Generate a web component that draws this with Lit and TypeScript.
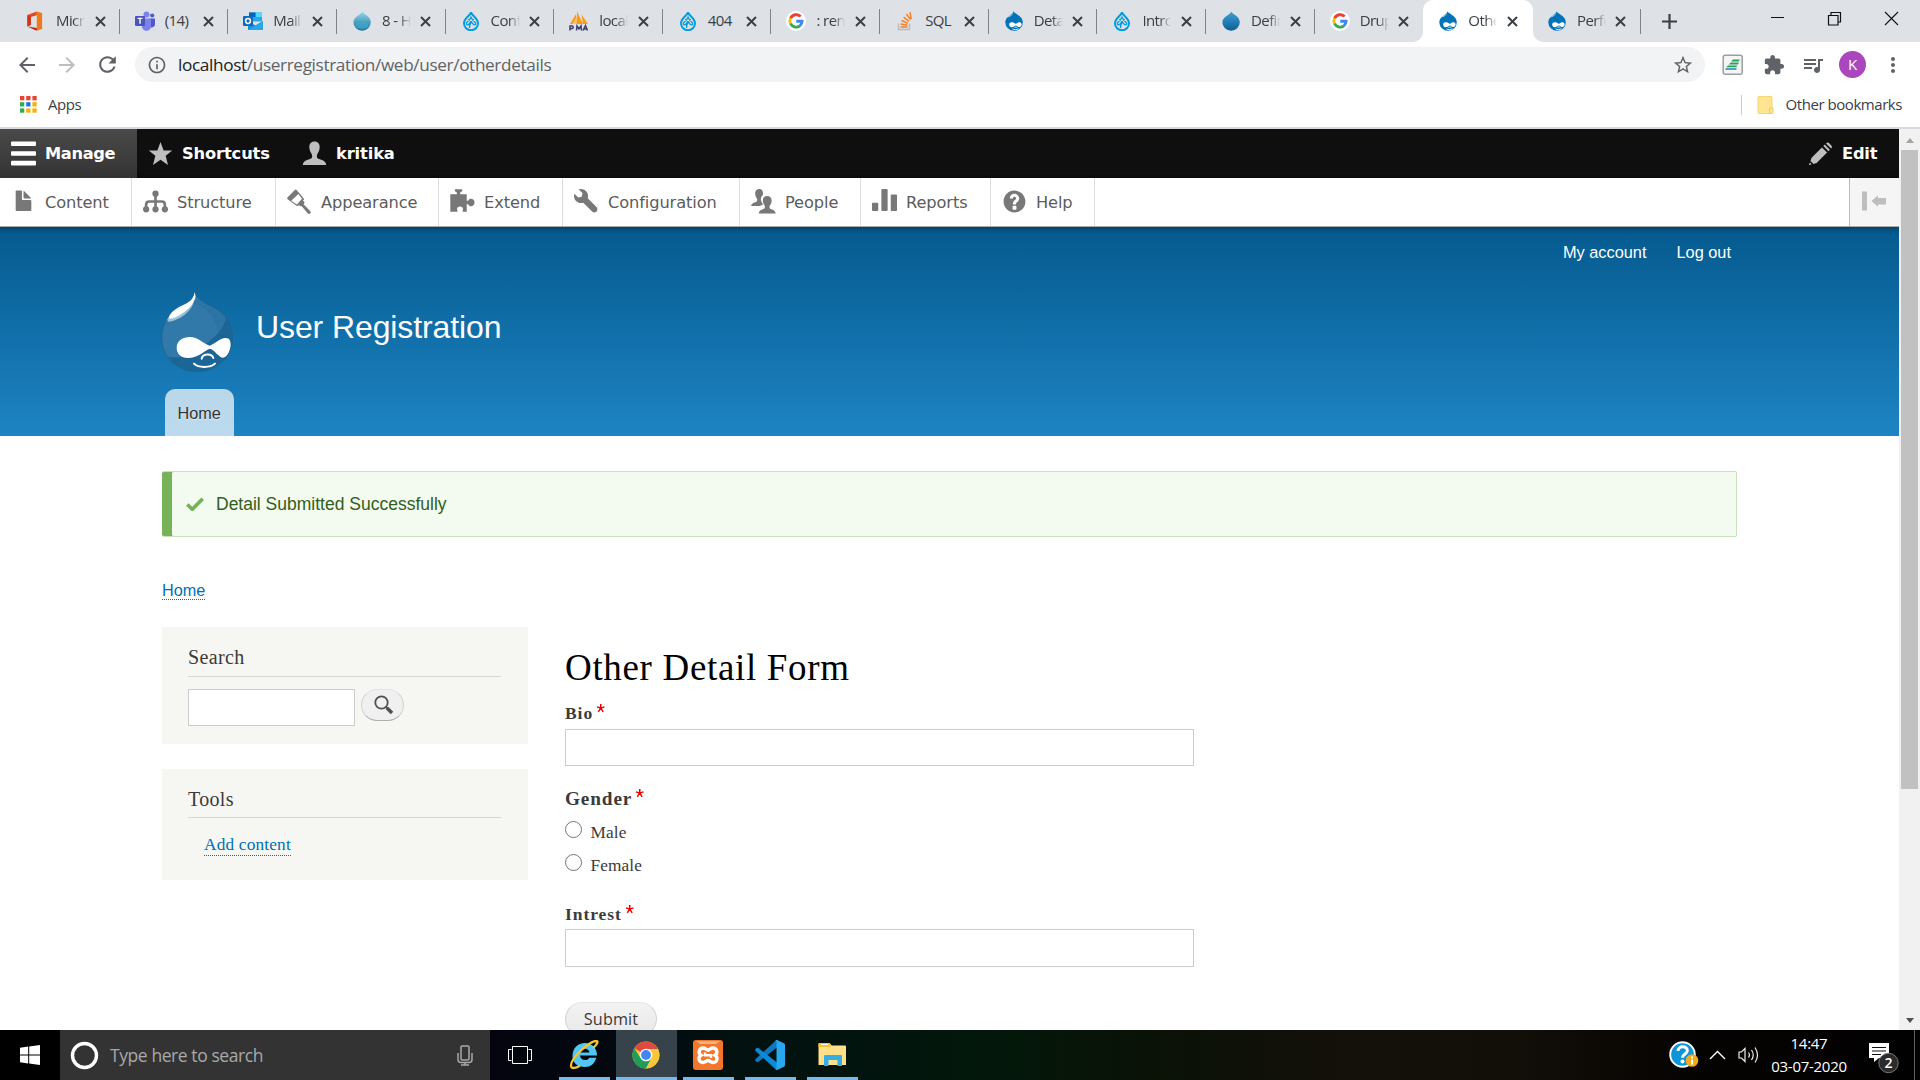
import { LitElement, html, svg, css, TemplateResult } from "lit";
import { customElement } from "lit/decorators.js";
import { classMap } from "lit/directives/class-map.js";

/* ---------- favicons ---------- */

const office = html`<svg class="fav" viewBox="0 0 20 20">
  <path d="M10.800 .4 1.400 4v11.600l3.400-1.700V5.900l6-1.600z" fill="#e8471f"/>
  <path d="M10.800 .4 16.100 2v16l-5.300 1.700z" fill="#f07a1a"/>
  <path d="M1.400 15.600 10.800 17v2.700z" fill="#b9200c"/>
  <path d="M1.400 4v11.600l3.400-1.700V5.900z" fill="#d3301a"/></svg>`;
const teams = html`<svg class="fav" viewBox="0 0 20 20">
  <circle cx="11.5" cy="3.6" r="3" fill="#7b83eb"/><circle cx="17.2" cy="4.5" r="2.1" fill="#5059c9"/>
  <path d="M14 7.5h6v5.8a3.4 3.4 0 0 1-6 2z" fill="#5059c9"/>
  <path d="M7 7.5h9v7a4.5 4.5 0 0 1-9 1.5z" fill="#7b83eb"/>
  <rect y="5" width="10" height="10" rx="1" fill="#4b53bc"/>
  <path d="M2.6 7.4h4.9M5.05 7.4v5.4" stroke="#fff" stroke-width="1.4"/></svg>`;
const outlook = html`<svg class="fav" viewBox="0 0 20 20">
  <path d="M6 1.5h13v9H6z" fill="#28a8ea"/><path d="M12.5 1.5H19V6h-6.5z" fill="#50d9ff"/><path d="M6 1.5h6.5V6H6z" fill="#0364b8"/>
  <path d="M5 10l7.5 4.5L20 10v9H5z" fill="#1490df"/><path d="M5 19 20 10v9z" fill="#28a8ea"/>
  <rect y="5" width="10" height="10" rx="1" fill="#0f6cbd"/>
  <circle cx="5" cy="10" r="2.4" fill="none" stroke="#fff" stroke-width="1.5"/></svg>`;
const drop = (top: string, low: string, id: string, shine = false) => html`<svg class="fav" viewBox="0 0 20 20">
  <defs><linearGradient id=${id} x1="0" y1="0" x2="0" y2="1"><stop offset="0" stop-color=${top}/><stop offset="1" stop-color=${low}/></linearGradient></defs>
  <path d="M10.400 .5c.5 2.600 8.400 4.600 8.400 10.800a8.700 8.400 0 0 1-17.400 0C1.400 5.600 9.200 4 10.400 .5z" fill="url(#${id})"/>
  ${shine ? svg`<ellipse cx="10" cy="14.500" rx="6.500" ry="3.500" fill="#3fb0d0" opacity=".6"/>` : ""}</svg>`;
const drupal9 = html`<svg class="fav" viewBox="0 0 20 20">
  <path d="M10 1.300C9.300 4.600 3 7 3 12.300a7 6.900 0 0 0 14 0C17 7 10.700 4.600 10 1.300z" fill="none" stroke="#009cde" stroke-width="2"/>
  <path d="M7.200 8.200C9.500 9.700 11 11.500 12.300 13.300c1.300 1.500 3.400-.4 1.700-2C12.500 9.800 10.800 8.300 10 6.200 9.200 8.300 7.500 9.800 6 11.300c-1.700 1.600.4 3.500 1.700 2C9 11.500 10.500 9.700 12.800 8.200M10 11.500c-1.300 1.800-1.800 3.200-1.500 5.500" fill="none" stroke="#009cde" stroke-width="1.300"/></svg>`;
const pma = html`<svg class="fav" viewBox="0 0 20 20">
  <path d="M1 13 7 3v10zM8 13V.5L14 13zM14 13 12.500 3.500 19 13z" fill="#f89c1c"/>
  <path d="M3.500 13 8 5v8z" fill="#ffc067"/>
  <path d="M1 19.500v-4.500h2.500q1.500 1.300 0 2.500H1M7.500 19.500l.5-4.500 2 3 2-3 .5 4.500M14 19.500l2.500-5 2 5M14.800 18h3" fill="none" stroke="#3f3f6b" stroke-width="1.500"/></svg>`;
const google = html`<svg class="fav" viewBox="0 0 20 20"><circle cx="10" cy="10" r="10" fill="#fff"/>
  <g fill="none" stroke-width="2.900">
  <path d="M14.600 5.600A6.100 6.100 0 0 0 4.600 7.300" stroke="#ea4335"/><path d="M4.600 7.200a6.100 6.100 0 0 0 0 5.600" stroke="#fbbc05"/>
  <path d="M4.600 12.700a6.100 6.100 0 0 0 9.500 1.900" stroke="#34a853"/><path d="M14 14.700a6.100 6.100 0 0 0 2.100-4.400H10.200" stroke="#4285f4"/></g></svg>`;
const stack = html`<svg class="fav" viewBox="0 0 20 20"><path d="M3.500 12.500v6h11v-6" fill="none" stroke="#bcbbbb" stroke-width="1.500"/>
  <path d="M5.500 16h7M5.700 13l6.800 1.300M6.600 9.500l6.300 2.900M8.600 6l5.300 4.400M11.500 3l4 5.600M15 1.200l1.300 6.700" stroke="#f48024" stroke-width="1.500"/></svg>`;
const druplicon = html`<svg class="fav" viewBox="0 0 20 20">
  <path d="M9.500 .3c.6 2.500 9.300 4.200 9.300 11a8.700 8.500 0 0 1-17.500 0C1.300 5.300 9 4 9.500 .3z" fill="#0073ba"/>
  <path d="M9.300 1.200c0 2.600-3 4.300-6 5.400C5 4.600 8.500 4 9.300 1.200z" fill="#cfe5f4"/>
  <path d="M5.200 13.600c0-3 4-3.200 6.700-.6 2.500-2.600 5.700-2.400 5.700.3 0 3.300-3.200 3.600-5.600.9-2.900 2.800-6.800 2.600-6.800-.6z" fill="#fff"/>
  <path d="M8.500 17.800c1.500 1.200 4.500 1.200 5.800-.2M10.500 16.600c.6-.8 2.200-.8 2.800 0" fill="none" stroke="#fff" stroke-width=".9"/></svg>`;

interface Tab { icon: TemplateResult; title: string; active?: boolean }
const TABS: Tab[] = [
  { icon: office, title: "Micr" },
  { icon: teams, title: "(14)" },
  { icon: outlook, title: "Mail" },
  { icon: drop("#8fd9ee", "#1a6f95", "dropA", true), title: "8 - H" },
  { icon: drupal9, title: "Conf" },
  { icon: pma, title: "local" },
  { icon: drupal9, title: "404" },
  { icon: google, title: ": ren" },
  { icon: stack, title: "SQL" },
  { icon: druplicon, title: "Deta" },
  { icon: drupal9, title: "Intro" },
  { icon: drop("#3fa0d8", "#0d5f96", "dropB"), title: "Defin" },
  { icon: google, title: "Drup" },
  { icon: druplicon, title: "Othe", active: true },
  { icon: druplicon, title: "Perfo" },
];

const material = (d: string, cls = "") =>
  html`<svg class="mi ${cls}" viewBox="0 0 24 24"><path d=${d} fill="currentColor"/></svg>`;

@customElement("browser-chrome")
class BrowserChrome extends LitElement {
  static styles = css`
    :host { display: block; height: 129px; font-family: "Open Sans", "Noto Sans", sans-serif; color: #3c4043; background: #fff; }
    .strip { display: flex; height: 42px; background: #dee1e6; padding-left: 11px; box-sizing: border-box; }
    .tab { display: flex; align-items: center; width: 108.65px; box-sizing: border-box; padding: 0 0 0 15px; position: relative; }
    .tab::after { content: ""; position: absolute; right: 0; top: 9px; width: 1px; height: 25px; background: #808488; }
    .tab.active::after, .tab.before::after { display: none; }
    .tab.active { background: #fff; border-radius: 10px 10px 0 0; box-shadow: 1px 0 #fff; }
    .tab.active .foot { position: absolute; bottom: 0; left: -10px; right: -11px; height: 10px;
      background: radial-gradient(circle at 0 0, transparent 9.5px, #fff 10px) left / 10px 10px no-repeat,
        radial-gradient(circle at 100% 0, transparent 9.5px, #fff 10px) right / 10px 10px no-repeat; }
    .fav { width: 20px; height: 20px; flex: none; display: block; }
    .title { width: 30px; margin-left: 10px; white-space: nowrap; font-size: 15px; letter-spacing: -0.6px; line-height: 24px; padding-bottom: 2px;
      -webkit-mask-image: linear-gradient(to right, #000 58%, transparent 97%); mask-image: linear-gradient(to right, #000 58%, transparent 97%); }
    .title.whole { -webkit-mask-image: none; mask-image: none; }
    .close { width: 11px; height: 11px; margin-left: 8.5px; flex: none; }
    .plus { width: 15px; height: 15px; margin: 13.5px 0 0 21px; }
    .win { display: flex; margin-left: auto; gap: 42px; padding: 11px 21px 0 0; align-items: flex-start; }
    .win svg { width: 15px; height: 15px; }
    .bar { display: flex; align-items: center; height: 45px; padding: 0 15px 0 15px; box-sizing: border-box; }
    .mi { width: 24px; height: 24px; flex: none; color: #5f6368; }
    .mi.next { margin-left: 16px; color: #bcbec1; }
    .mi.reload { margin-left: 16px; width: 25px; height: 25px; }
    .omni { flex: none; width: 1570px; margin-left: 15px; height: 35px; border-radius: 18px; background: #f1f3f4; display: flex; align-items: center; padding: 0 11px 0 12px; box-sizing: border-box; }
    .omni .mi { width: 20px; height: 20px; }
    .url { margin-left: 11px; font-size: 17.2px; letter-spacing: -0.36px; color: #5f6368; white-space: nowrap; line-height: 30px; }
    .url b { font-weight: 400; color: #202124; }
    .omni .mi.star { margin-left: auto; width: 22px; height: 22px; }
    .tools { display: flex; align-items: center; flex: 1; padding-left: 17px; }
    .ext { width: 22px; height: 22px; margin-right: 19px; }
    .avatar { width: 27px; height: 27px; margin: 0 15px 0 14px; border-radius: 50%; background: #ab47bc; color: #fff; font-size: 15px; line-height: 27px; text-align: center; }
    .tools .puzzle { width: 22px; height: 22px; margin-right: 16px; }
    .marks { display: flex; align-items: center; height: 34px; padding: 1px 18px 0 20px; box-sizing: border-box; font-size: 15px; letter-spacing: -0.45px; }
    .grid { width: 17px; height: 17px; margin-right: 11px; }
    .other { display: flex; align-items: center; margin-left: auto; border-left: 1px solid #c8cacd; padding-left: 15px; height: 20px; }
    .other svg { width: 17px; height: 18px; margin-right: 12px; }
    .marks .text { padding-bottom: 1px; }
    .edge { height: 2px; background: #d9d9e0; margin-top: 6px; }
  `;

  render() {
    const activeIndex = TABS.findIndex((t) => t.active);
    const colors = ["#ea4335", "#ea4335", "#ea4335", "#34a853", "#1a73e8", "#fbae05", "#34a853", "#fbae05", "#fbae05"];
    return html`
      <div class="strip">
        ${TABS.map((t, i) => html`<div class=${classMap({ tab: true, active: !!t.active, before: i === activeIndex - 1 })}>
          ${t.active ? html`<span class="foot"></span>` : ""}
          ${t.icon}<span class=${classMap({ title: true, whole: t.title.length === 3 || t.title.startsWith("(") })}>${t.title}</span>
          <svg class="close" viewBox="0 0 11 11"><path d="M1 1l9 9M10 1l-9 9" stroke="#3c4043" stroke-width="2"/></svg>
        </div>`)}
        <svg class="plus" viewBox="0 0 15 15"><path d="M7.500 0v15M0 7.500h15" stroke="#3c4043" stroke-width="2.200"/></svg>
        <div class="win">
          <svg viewBox="0 0 15 15"><path d="M1 6.500h13" stroke="#111"/></svg>
          <svg viewBox="0 0 15 15"><path d="M1.500 4.500h9.500v9.500H1.500zM4 4V1.500h9.500V11H11.500" fill="none" stroke="#111" stroke-width="1.200"/></svg>
          <svg viewBox="0 0 15 15"><path d="M1 1l13 13M14 1L1 14" stroke="#111" stroke-width="1.100"/></svg>
        </div>
      </div>
      <div class="bar">
        ${material("M20 11H7.830l5.590-5.590L12 4l-8 8 8 8 1.410-1.410L7.830 13H20v-2z")}
        ${material("M12 4l-1.410 1.410L16.170 11H4v2h12.170l-5.580 5.590L12 20l8-8z", "next")}
        ${material("M17.650 6.350C16.200 4.900 14.210 4 12 4c-4.420 0-7.990 3.580-7.990 8s3.570 8 7.990 8c3.730 0 6.840-2.550 7.730-6h-2.080c-.82 2.330-3.040 4-5.650 4-3.310 0-6-2.690-6-6s2.690-6 6-6c1.660 0 3.140.69 4.220 1.780L13 11h7V4l-2.350 2.350z", "reload")}
        <div class="omni">
          ${material("M11 17h2v-6h-2v6zm1-15C6.480 2 2 6.480 2 12s4.480 10 10 10 10-4.480 10-10S17.520 2 12 2zm0 18c-4.410 0-8-3.590-8-8s3.590-8 8-8 8 3.590 8 8-3.590 8-8 8zM11 9h2V7h-2v2z")}
          <span class="url"><b>localhost</b>/userregistration/web/user/otherdetails</span>
          ${material("M22 9.240l-7.190-.62L12 2 9.190 8.630 2 9.240l5.460 4.730L5.820 21 12 17.270 18.180 21l-1.630-7.030L22 9.240zM12 15.400l-3.760 2.270 1-4.280-3.320-2.880 4.380-.38L12 6.100l1.710 4.040 4.380.38-3.320 2.880 1 4.280L12 15.400z", "star")}
        </div>
        <div class="tools">
          <svg class="ext" viewBox="0 0 22 22"><rect x="1.200" y="1.200" width="19" height="19" rx="2" fill="#f4f5f5" stroke="#9b9d9f" stroke-width="1.500"/>
            <path d="M11 5.500h7l-1.500 2H9zM9 8.500h8l-1.200 1.900H6.500zM6 11.400h9.200l-1 1.900H4z" fill="#2ea05a"/><path d="M3.500 15h11" stroke="#2a7fc0" stroke-width="1.500"/></svg>
          ${material("M20.500 11H19V7c0-1.100-.9-2-2-2h-4V3.500C13 2.120 11.880 1 10.500 1S8 2.120 8 3.500V5H4c-1.100 0-1.990.9-1.990 2v3.800H3.500c1.490 0 2.700 1.210 2.700 2.700s-1.210 2.700-2.700 2.700H2V20c0 1.100.9 2 2 2h3.800v-1.500c0-1.490 1.210-2.700 2.700-2.700 1.490 0 2.700 1.210 2.700 2.700V22H17c1.100 0 2-.9 2-2v-4h1.500c1.380 0 2.500-1.120 2.500-2.500S21.880 11 20.500 11z", "puzzle")}
          ${material("M15 6H3v2h12V6zm0 4H3v2h12v-2zM3 16h8v-2H3v2zM17 6v8.180c-.31-.11-.65-.18-1-.18-1.660 0-3 1.340-3 3s1.340 3 3 3 3-1.340 3-3V8h3V6h-5z")}
          <span class="avatar">K</span>
          ${material("M12 8c1.100 0 2-.9 2-2s-.9-2-2-2-2 .9-2 2 .9 2 2 2zm0 2c-1.100 0-2 .9-2 2s.9 2 2 2 2-.9 2-2-.9-2-2-2zm0 6c-1.100 0-2 .9-2 2s.9 2 2 2 2-.9 2-2-.9-2-2-2z")}
        </div>
      </div>
      <div class="marks">
        <svg class="grid" viewBox="0 0 17 17">${colors.map((c, i) => svg`<rect x=${(i % 3) * 6.2} y=${Math.floor(i / 3) * 6.2} width="4.300" height="4.300" fill=${c}/>`)}</svg>
        <span class="text">Apps</span>
        <span class="other">
          <svg viewBox="0 0 17 18"><path d="M2 .5h12a1 1 0 0 1 1 1V17.500H2a1 1 0 0 1-1-1v-15a1 1 0 0 1 1-1z" fill="#ffe591" stroke="#f4d573"/><path d="M12.500 12h3.500v4.500a1 1 0 0 1-1 1h-2.500z" fill="#ffe591" stroke="#f0cc58"/></svg>
          <span class="text">Other bookmarks</span></span>
      </div>
      <div class="edge"></div>`;
  }
}

/* ---------- admin toolbar ---------- */

const tool = (inner: TemplateResult) => html`<svg class="ti" viewBox="0 0 16 16">${inner}</svg>`;
const TRAY = [
  { label: "Content", width: 132, icon: tool(svg`<path d="M12.502 7h-5c-.276 0-.502-.225-.502-.5v-5c0-.275-.225-.5-.5-.5h-3c-.275 0-.5.225-.5.5v12.029c0 .275.225.5.5.5h9c.275 0 .5-.225.5-.5V7.500c0-.275-.225-.5-.498-.5zM8.502 6h4c.275 0 .34-.159.146-.354L8.355 1.354c-.195-.195-.353-.129-.353.146v4c0 .275.225.5.5.5z"/>`) },
  { label: "Structure", width: 144, icon: tool(svg`<circle cx="8" cy="3" r="2"/><circle cx="2" cy="13" r="2"/><circle cx="8" cy="13" r="2"/><circle cx="14" cy="13" r="2"/><path d="M8 4v8M2 12.500V10q0-2 2-2h8q2 0 2 2v2.500" fill="none" stroke="#787878" stroke-width="1.700"/>`) },
  { label: "Appearance", width: 163, icon: tool(svg`<path d="M6 .4L9.700 4.800 11 6.600 7.500 10.600 6.300 10.900.6 6.700Q-.2 6 .4 5.200L5.200.5q.4-.4.8-.1zM7.300 3.200L2.700 7.500l3.600 2.400L9.600 6.200z" fill-rule="evenodd"/><path d="M8.300 8.800l1.500-1.600 1.300.9q.3 1.100-.5 1.700l4.200 4.200q.8 1 0 1.700-.9.600-1.700-.3L9.300 10.900q-1 .5-1.600-.5z"/>`) },
  { label: "Extend", width: 124, icon: tool(svg`<path d="M.2 3.300h4.200V2.200C2.700 1.800 2.700.2 3.700.2h3.400c1.200 0 1.200 1.600-.6 2V3.300h4.200v4.200h1c.6-2 4-1.600 4 1.100s-3.400 3.200-4 1.100h-1v4.800H8.300q-.6-.5 0-1.200c.5-2.900-4.200-2.900-3.800 0 .6.7.4 1.200 0 1.200H.2z"/>`) },
  { label: "Configuration", width: 177, icon: tool(svg`<path d="M14.416 11.586l-.01-.008v-.001l-5.656-5.656c.15-.449.252-.921.252-1.421 0-2.485-2.016-4.500-4.502-4.500-.505 0-.981.102-1.434.255l2.431 2.431-.588 2.196-2.196.588L.268 3.025C.106 3.489 0 3.981 0 4.500 0 6.986 2.014 9 4.500 9c.5 0 .972-.102 1.421-.251l5.667 5.665c.781.781 2.047.781 2.828 0s.781-2.047 0-2.828z"/>`) },
  { label: "People", width: 121, icon: tool(svg`<path d="M5.300 0C3.600 0 2.500 1.400 2.700 3.200c.1 1.400.6 2.200 1.100 2.900.3.700.2 1.600-.1 1.900C2.600 8.700.3 8.800.1 10.900h5.400c1.300-.6 1.900-.6 2.200-1.100C5.900 7.500 5.900 5.300 7.600 3.900 8.100 1.500 7 0 5.300 0z"/><path d="M10.300 4.500c-1.900 0-2.900 1.400-2.700 3.200.1 1.400.7 2.200 1.100 2.900.3.700.2 1.300-.1 1.800-1.100.8-3.500.9-3.600 3.200h10.800c-.2-2.300-2.500-2.400-3.700-3.200-.3-.5-.4-1.100 0-1.800.5-.7 1-1.500 1.100-2.900.1-1.800-1-3.200-2.900-3.200z"/>`) },
  { label: "Reports", width: 130, icon: tool(svg`<path d="M4 13.529c0 .275-.225.5-.5.5h-3c-.275 0-.5-.225-.5-.5v-4.250c0-.274.225-.5.5-.5h3c.275 0 .5.226.5.5zM10.002 13.529c0 .275-.225.5-.5.5h-3c-.275 0-.502-.225-.502-.5v-13c0-.274.227-.5.502-.5h3c.275 0 .5.226.5.5zM16.002 13.529c0 .275-.225.5-.5.5h-3c-.275 0-.5-.225-.5-.5v-9.500c0-.275.225-.5.5-.5h3c.275 0 .5.225.5.5z"/>`) },
  { label: "Help", width: 104, icon: tool(svg`<path d="M8.002 1c-3.868 0-7.002 3.134-7.002 7s3.134 7 7.002 7c3.865 0 7-3.134 7-7s-3.135-7-7-7zm3 5c0 .551-.16 1.085-.477 1.586l-.158.22c-.07.093-.189.241-.361.393-.168.148-.35.299-.545.447l-.203.189-.141.129-.096.17-.021.235v.63h-2.001v-.704c.026-.396.078-.73.204-.999.125-.269.271-.498.439-.688l.225-.21-.01-.015.176-.14.137-.128c.186-.139.357-.277.516-.417l.148-.18c.098-.152.168-.323.168-.518 0-.552-.447-1-1-1s-1.002.448-1.002 1h-2c0-1.657 1.343-3 3.002-3 1.656 0 3 1.343 3 3zm-1.750 6.619c0 .344-.281.625-.625.625h-1.250c-.345 0-.626-.281-.626-.625v-1.238c0-.344.281-.625.626-.625h1.250c.344 0 .625.281.625.625z"/>`) },
];

@customElement("admin-toolbar")
class AdminToolbar extends LitElement {
  static styles = css`
    :host { display: block; position: relative; z-index: 1; font-family: "DejaVu Sans", Verdana, sans-serif; font-size: 16.25px; }
    .bar { display: flex; height: 49px; background: #0f0f0f; color: #fff; font-weight: 700; line-height: 49px; letter-spacing: -0.12px; }
    .item { display: flex; align-items: center; box-sizing: border-box; padding-left: 11px; width: 154px; }
    .item.manage { width: 137px; background: linear-gradient(#4a4a4a, #333); letter-spacing: -0.35px; }
    .item.edit { margin-left: auto; width: 102px; letter-spacing: -0.2px; }
    .ti { width: 25px; height: 25px; flex: none; margin-right: 9px; fill: #bebebe; }
    .label { padding-bottom: 1px; white-space: nowrap; }
    .tray { display: flex; height: 49px; box-sizing: border-box; background: #fff; border-bottom: 1px solid #aaa; box-shadow: -1px 0 5px 2px rgba(0,0,0,.33); color: #5c5c5c; letter-spacing: -0.12px; line-height: 47px; }
    .link { display: flex; align-items: center; padding-left: 11px; box-sizing: border-box; border-right: 1px solid #ddd; }
    .link .ti { fill: #787878; margin-top: -1px; }
    .toggle { margin-left: auto; width: 50px; box-sizing: border-box; border-left: 1px solid #b9b9b9; background: #f5f5f5; display: flex; align-items: center; padding-left: 12px; }
    .toggle svg { width: 25px; height: 20px; margin-top: -2px; }
  `;
  render() {
    return html`
      <div class="bar">
        <div class="item manage">${tool(svg`<path d="M.6.300h14.800q.6 0 .6.600v1.700q0 .6-.6.600H.6Q0 3.200 0 2.600V.9Q0 .3.600.3zM.6 6.500h14.800q.6 0 .6.600v1.700q0 .6-.6.600H.6Q0 9.400 0 8.800V7.100q0-.6.600-.6zM.6 12.700h14.800q.6 0 .6.600V15q0 .6-.6.600H.6Q0 15.600 0 15v-1.700q0-.6.600-.6z" fill="#fff"/>`)}<span class="label">Manage</span></div>
        <div class="item">${tool(svg`<path d="M8 .7l2 5.300h5.500L11.300 9.400l1.500 5.900L8 12l-4.800 3.300 1.500-5.900L.5 6H6z"/>`)}<span class="label">Shortcuts</span></div>
        <div class="item">${tool(svg`<path d="M8 .3C5.700.3 4.500 2 4.700 4.300c.1 1.700.8 2.900 1.400 3.800.5.900.6 2.100 0 2.900C4.500 12 .8 12 .5 15.400h15c-.3-3.400-4-3.400-5.600-4.400-.6-.8-.5-2 0-2.900.6-.9 1.300-2.100 1.400-3.800C11.500 2 10.300.3 8 .3z"/>`)}<span class="label">kritika</span></div>
        <div class="item edit">${tool(svg`<path d="M.5 15.500l.7-1.800 1.100 1.100zM1.600 12.800l.7-2.100L8.900 4.200l3.300 3.200-6.700 6.600-2 .7zM9.800 3.200l.9-.9L14 5.600l-.9.9zM11.500 1.600c.8-.8 1.500-.8 2.100-.1l1.300 1.300c.6.700.6 1.300-.1 2z"/>`)}<span class="label">Edit</span></div>
      </div>
      <div class="tray">
        ${TRAY.map((t) => html`<div class="link" style="width:${t.width}px">${t.icon}<span>${t.label}</span></div>`)}
        <div class="toggle"><svg viewBox="0 0 25 20"><path d="M0 .5h5v19H0zM9.500 10l6.500-5.700V7h8v6.500h-8v2.200z" fill="#bebebe"/></svg></div>
      </div>`;
  }
}

/* ---------- site ---------- */

const star = html`<svg class="req" viewBox="0 0 8 9"><path d="M4 0v4.400M0 3l4 1.400M8 3L4 4.400M1.400 8.300L4 4.400M6.600 8.300L4 4.400" stroke="#e00" stroke-width="1.600"/></svg>`;

@customElement("site-page")
class SitePage extends LitElement {
  static styles = css`
    :host { display: block; font-family: "Liberation Sans", Arial, sans-serif; color: #3b3b3b; }
    .header { height: 209px; box-sizing: border-box; background: linear-gradient(#055a8e, #1d84c3); padding: 15px 168px 0 161px; display: flex; flex-direction: column; color: #fffeff; }
    .user { display: flex; justify-content: flex-end; gap: 30px; font-size: 16.350px; line-height: 21px; }
    .brand { display: flex; margin-top: 28px; height: 81px; }
    .logo { width: 72px; height: 81px; }
    .name { font-size: 32px; letter-spacing: -0.1px; line-height: 40px; margin: 16px 0 0 23px; }
    .tab { margin: 17px 0 0 4px; width: 69px; height: 47px; box-sizing: border-box; border-radius: 10px 10px 0 0; background: rgba(255,255,255,.7); color: #333; padding-left: 12.5px; font-size: 16.250px; line-height: 48px; text-shadow: 0 1px #eee; }
    .main { padding-left: 162px; width: 1575px; }
    .msg { margin-top: 35px; height: 66px; box-sizing: border-box; border: 1px solid #c9e1bd; border-left: 0; border-radius: 2px; background: #f3faef; box-shadow: inset 10px 0 #77b259; color: #325e1c; display: flex; align-items: center; padding-left: 24px; font-size: 17.500px; }
    .msg svg { width: 18px; height: 14px; margin-right: 12px; }
    a { color: #0071b3; border-bottom: 1px dotted #0071b3; display: inline-block; }
    .crumb { margin-top: 44px; font-size: 16.250px; line-height: 18px; height: 19px; }
    .cols { display: flex; margin-top: 27px; gap: 37px; font-family: "Liberation Serif", Georgia, serif; }
    .side { width: 366px; display: flex; flex-direction: column; gap: 25px; }
    .block { box-sizing: border-box; height: 117px; background: #f6f6f2; padding: 0 27px 0 26px; }
    .block.short { height: 111px; }
    .block h2 { margin: 0; font-weight: 400; font-size: 20px; letter-spacing: .35px; line-height: 26px; padding: 17px 0 6px; border-bottom: 1px solid #d6d6d6; }
    .block.short h2 { padding-bottom: 5px; }
    .find { display: flex; gap: 6px; margin-top: 12px; align-items: flex-start; }
    .box { box-sizing: border-box; height: 38px; width: 629px; border: 1px solid #ccc; background: #fff; }
    .box.bio { height: 37px; }
    .find .box { width: 167px; height: 37px; }
    .go { width: 43px; height: 32px; box-sizing: border-box; border: 1px solid #d2d2d2; border-top-color: #e4e4e4; border-bottom-color: #b0b0b0; border-radius: 16px; background: #f0f0f0; display: flex; padding: 5px 0 0 12px; }
    .go svg { width: 20px; height: 20px; }
    .add { margin: 16px 0 0 16px; font-size: 17.300px; letter-spacing: .18px; line-height: 22px; }
    .add a { line-height: 20px; height: 20px; }
    .form { display: flex; flex-direction: column; }
    h1 { margin: 17px 0 0; font-weight: 400; font-size: 37px; line-height: 48px; letter-spacing: .67px; color: #000; }
    .label { display: flex; font-weight: 700; font-size: 17.500px; line-height: 22px; margin: 10px 0 5px; letter-spacing: .95px; }
    .label.group { font-size: 19.300px; line-height: 24px; margin: 21px 0 6px; letter-spacing: .85px; }
    .label.last { margin: 20px 0 4px; }
    .req { width: 7.500px; height: 8.500px; margin: 2px 0 0 4px; overflow: visible; }
    .radio { display: flex; height: 33px; font-size: 17.300px; line-height: 31px; letter-spacing: .1px; gap: 8.5px; }
    .dot { width: 17px; height: 17px; box-sizing: border-box; border: 1px solid #767676; border-radius: 50%; margin-top: 4px; }
    .submit { margin-top: 35px; width: 92px; height: 34px; box-sizing: border-box; border: 1px solid #d2d2d2; border-top-color: #e4e4e4; border-radius: 17px; background: linear-gradient(#f3f3f3, #e8e8e8); color: #3a3a3a; font: 16.250px/32px "Open Sans", sans-serif; text-align: center; letter-spacing: .1px; }
  `;
  render() {
    return html`
      <div class="header">
        <div class="user"><span>My account</span><span>Log out</span></div>
        <div class="brand">
          <svg class="logo" viewBox="64 63 216 243">
            <defs><clipPath id="body"><path d="M165 65C168 84 190 97 213 108 254 126 279 160 279 202 279 262 230 305 172 305 115 305 66 262 66 202 66 165 86 132 120 113 146 99 163 93 165 65z"/></clipPath></defs>
            <g clip-path="url(#body)"><path d="M60 60h230v250H60z" fill="#1c6697"/>
              <path d="M60 60h185C262 118 262 145 250 168 238 190 222 205 200 220L140 262H60z" fill="#3079a8"/>
              <path d="M170 90C210 110 245 122 256 145 252 165 244 180 235 190 235 150 200 110 160 100z" fill="#2c74a3"/></g>
            <path d="M165 65C168 84 190 97 213 108 254 126 279 160 279 202 279 262 230 305 172 305 115 305 66 262 66 202 66 165 86 132 120 113 146 99 163 93 165 65z" fill="none" stroke="#245f86" stroke-width="2"/>
            <path d="M163 92C160 120 120 152 86 155 80 150 84 143 90 138z" fill="#9dc0d9"/>
            <path d="M165 67C169 78 168 90 161 95 158 108 118 145 90 146 84 143 92 126 118 111 140 100 160 96 165 67z" fill="#fff"/>
            <path d="M111 233C111 213 130 201 150 201 176 201 192 222 210 227 226 222 240 204 258 204 271 204 273 214 273 226 271 244 262 263 250 263 238 263 226 241 211 236 196 240 176 264 145 264 123 264 111 250 111 233z" fill="#fff"/>
            <path d="M186 266C188 251 216 249 221 264M163 281C175 294 213 294 226 281" fill="none" stroke="#fff" stroke-width="6" stroke-linecap="round"/>
          </svg>
          <div class="name">User Registration</div>
        </div>
        <div class="tab">Home</div>
      </div>
      <div class="main">
        <div class="msg"><svg viewBox="0 0 18 14"><path d="M1.300 7.500l5 4.800L16.700 1.800" fill="none" stroke="#73b355" stroke-width="3.600"/></svg>Detail Submitted Successfully</div>
        <div class="crumb"><a>Home</a></div>
        <div class="cols">
          <div class="side">
            <div class="block"><h2>Search</h2>
              <div class="find"><div class="box"></div>
                <div class="go"><svg viewBox="0 0 20 20"><circle cx="7.500" cy="7.500" r="6.200" fill="none" stroke="#505050" stroke-width="1.800"/><path d="M11.800 11.800l2 2" stroke="#505050" stroke-width="2"/><path d="M13 13l5 5" stroke="#505050" stroke-width="3.600"/></svg></div></div>
            </div>
            <div class="block short"><h2>Tools</h2><div class="add"><a>Add content</a></div></div>
          </div>
          <div class="form">
            <h1>Other Detail Form</h1>
            <div class="label">Bio ${star}</div><div class="box bio"></div>
            <div class="label group">Gender ${star}</div>
            <div class="radio"><span class="dot"></span>Male</div>
            <div class="radio"><span class="dot"></span>Female</div>
            <div class="label last">Intrest ${star}</div><div class="box"></div>
            <div class="submit">Submit</div>
          </div>
        </div>
      </div>`;
  }
}

/* ---------- desktop task bar ---------- */

@customElement("task-bar")
class TaskBar extends LitElement {
  static styles = css`
    :host { display: flex; height: 50px; font-family: "Open Sans", "Noto Sans", sans-serif; background: linear-gradient(90deg, #04040f 490px, #03090f 620px, #021210 760px, #02150d 900px, #03180a 1000px, #0a1206 1150px, #14100a 1350px, #120e08 1520px, #050302 1700px, #020101 1920px); color: #fff; }
    svg { display: block; flex: none; }
    .start { width: 60px; background: #000; display: flex; align-items: center; justify-content: center; }
    .search { width: 430px; box-sizing: border-box; background: #333; display: flex; align-items: center; padding: 0 17px 0 10px; color: #a9a9a9; font-size: 17.500px; letter-spacing: -0.42px; }
    .search span { flex: 1; margin-left: 11px; }
    .view { width: 62px; padding: 16px 0 0 18px; box-sizing: border-box; }
    .apps { display: flex; }
    .app { width: 62px; display: flex; align-items: center; justify-content: center; position: relative; }
    .app svg { margin-right: 2px; }
    .app:first-child { padding-left: 2px; width: 60px; }
    .app:first-child svg { margin: 0; }
    .app::after { content: ""; position: absolute; left: 5px; right: 6px; bottom: 0; height: 3px; background: #76b9ed; }
    .app:first-child::after { left: 7px; right: 4px; }
    .app.on { background: #36434a; width: 61px; margin: 0 1px 0 2px; }
    .app.on::after { left: 0; right: 0; }
    .tray { margin-left: auto; display: flex; align-items: center; }
    .chev { margin-left: 10px; }
    .sound { margin-left: 12px; }
    .clock { width: 92px; text-align: center; font-size: 15px; line-height: 23px; letter-spacing: -0.28px; margin-left: 3px; padding-bottom: 1px; }
    .note { margin: 2px 0 0 13px; }
    .peek { width: 1px; height: 50px; background: #66635f; margin: 0 5px 0 14px; }
  `;
  render() {
    return html`
      <div class="start"><svg width="20" height="20" viewBox="0 0 20 20"><path d="M0 2.800l8.200-1.200v7.900H0zM9.200 1.400L20 0v9.500H9.200zM0 10.500h8.200v7.900L0 17.200zM9.200 10.500H20V20L9.200 18.600z" fill="#fff"/></svg></div>
      <div class="search">
        <svg width="29" height="29" viewBox="0 0 29 29"><circle cx="14.500" cy="14.500" r="12" fill="none" stroke="#fff" stroke-width="3.400"/></svg>
        <span>Type here to search</span>
        <svg width="16" height="21" viewBox="0 0 16 21"><rect x="4" y="1" width="8" height="14" rx="1" fill="none" stroke="#a9a9a9" stroke-width="1.500"/><path d="M1 8v6.500q0 3 3 3h8q3 0 3-3V8M8 17.500V20M4 20h8" fill="none" stroke="#a9a9a9" stroke-width="1.500"/></svg>
      </div>
      <div class="view"><svg width="24" height="18" viewBox="0 0 24 18"><path d="M4.500.5h15v17h-15zM3.500 3.500H.5v11h3M20.500 3.500h3v11h-3" fill="none" stroke="#fff" stroke-width="1"/></svg></div>
      <div class="apps">
        <div class="app"><svg width="30" height="30" viewBox="0 0 30 30">
          <path d="M3.500 16C3.500 8 9 3 16 3s12 5 12 12.500H11c.4 5.300 7.500 6 9.300 2.300h7C25.500 24 21.500 27 16 27 8.500 27 3.500 23 3.500 16zm7.700-3.500h9.300c-.6-5-8.500-5-9.300 0z" fill="#53c7f4" fill-rule="evenodd"/>
          <path d="M24 8C29 3.500 29.500 1 27 1 21 1 2 17.500 2 25.500c0 4 5 2.500 9 .2" fill="none" stroke="#f7c533" stroke-width="2.300"/></svg></div>
        <div class="app on"><svg width="28" height="28" viewBox="0 0 28 28">
          <circle cx="14" cy="14" r="13.500" fill="#fbc73a"/>
          <path d="M14 14L2.300 7.250A13.500 13.500 0 0 1 25.700 7.250L26 8H14z" fill="#dd4b3e"/>
          <path d="M2.300 7.250A13.500 13.500 0 0 0 14 27.500L19.500 17 14 14 8.500 17z" fill="#1e9e58"/>
          <path d="M14 27.500L19.500 17 14 14V8h12A13.500 13.500 0 0 1 14 27.500z" fill="#fbc73a"/>
          <circle cx="14" cy="14" r="6.300" fill="#fff"/><circle cx="14" cy="14" r="4.900" fill="#4285f4"/></svg></div>
        <div class="app"><svg width="30" height="30" viewBox="0 0 30 30"><rect width="30" height="30" rx="3" fill="#f4762a"/><path d="M3 1h24l-4 3H7z" fill="#f9ae80"/>
          <path d="M10 8c2.600 0 3.200 2 5 2s2.400-2 5-2a3.900 3.900 0 0 1 2 7.200A3.900 3.900 0 0 1 20 22.500c-2.600 0-3.200-2-5-2s-2.400 2-5 2a3.900 3.900 0 0 1-2-7.300A3.900 3.900 0 0 1 10 8z" fill="none" stroke="#fff" stroke-width="3.400"/><path d="M12 12.500v2.700h6v2.800" fill="none" stroke="#fff" stroke-width="2.400"/></svg></div>
        <div class="app"><svg width="30" height="30" viewBox="0 0 30 30"><path d="M22 7.500L3.600 21.800Q2.500 22.500 1.600 21.700L.5 20.700Q-.2 19.800.6 19L20.500 .8 22 0z" fill="#0f76c0"/><path d="M22 22.500L3.600 8.200Q2.500 7.500 1.600 8.300L.5 9.300Q-.2 10.200.6 11L20.500 29.200 22 30z" fill="#0b8ad8"/><path d="M22 0l7 3.300q1 .5 1 1.700v20q0 1.200-1 1.700L22 30q-1 .2-1.800-.8 1.300.3 1.300-1.200V2q0-1.500-1.300-1.200Q21-.2 22 0z" fill="#29a8f0"/></svg></div>
        <div class="app"><svg width="28" height="24" viewBox="0 0 28 24"><path d="M.5 1q0-1 1-1h10l2 2.500H27q1 0 1 1V22H.5z" fill="#ffe08a"/><path d="M.5 1q0-1 1-1h10l2 2.500-2 1.500H.5z" fill="#f5c430"/><path d="M3 1.500h7" stroke="#fff" stroke-width="1"/><path d="M6 13q0-1 1-1h16q1 0 1 1v10h-4.500v-6h-9v6H6z" fill="#34aee4"/></svg></div>
      </div>
      <div class="tray">
        <svg width="30" height="30" viewBox="0 0 30 30"><circle cx="13.500" cy="14.500" r="12.300" fill="#0c95d8" stroke="#fff" stroke-width="1.900"/><path d="M9 11c0-5.500 9.500-5.500 9.300-.3 0 3.500-4.800 3-4.800 7" fill="none" stroke="#fff" stroke-width="3"/><circle cx="13.500" cy="21.500" r="2" fill="#fff"/><circle cx="23" cy="20.500" r="6.300" fill="#f5aa1c"/><path d="M23 16.500v2M23 19.500v5" stroke="#fff" stroke-width="2"/></svg>
        <svg class="chev" width="17" height="10" viewBox="0 0 17 10"><path d="M1 9l7.500-7.500L16 9" fill="none" stroke="#fff" stroke-width="1.400"/></svg>
        <svg class="sound" width="22" height="18" viewBox="0 0 22 18"><path d="M1 6h2.500L7 2.500v13L3.500 12H1zM10.500 6.500q1.800 2.500 0 5M13.500 4q3.500 5 0 10M17 1.500q5 7.500 0 15" fill="none" stroke="#eee" stroke-width="1.200"/></svg>
        <div class="clock">14:47<br/>03-07-2020</div>
        <svg class="note" width="32" height="36" viewBox="0 0 32 36"><path d="M1 5h20v15H11l-5 4v-4H1z" fill="#fff"/><path d="M4 9.500h14M4 13h14M4 16.500h9" stroke="#111" stroke-width="1.100"/><circle cx="20.500" cy="25" r="9.700" fill="#2b2b2b" stroke="#777" stroke-width="1"/><text x="20.500" y="30" text-anchor="middle" font-size="14" font-weight="600" fill="#fff">2</text></svg>
        <span class="peek"></span>
      </div>`;
  }
}

@customElement("app-root")
class AppRoot extends LitElement {
  static styles = css`
    :host { display: flex; flex-direction: column; width: 1920px; height: 1080px; overflow: hidden; background: #fff; }
    .view { display: flex; height: 901px; }
    .doc { width: 1899px; height: 901px; overflow: hidden; }
    .scroll { width: 21px; box-sizing: border-box; background: #f1f1f1; display: flex; flex-direction: column; align-items: center; padding: 9px 0 7px; }
    .up, .down { border: 4.500px solid transparent; border-top: 0; border-bottom: 5px solid #a3a3a3; }
    .down { border-top: 5px solid #505050; border-bottom: 0; margin-top: auto; }
    .thumb { width: 17px; height: 639px; margin-top: 7px; background: #c1c1c1; }
  `;
  render() {
    return html`
      <browser-chrome></browser-chrome>
      <div class="view">
        <div class="doc"><admin-toolbar></admin-toolbar><site-page></site-page></div>
        <div class="scroll"><i class="up"></i><i class="thumb"></i><i class="down"></i></div>
      </div>
      <task-bar></task-bar>`;
  }
}
